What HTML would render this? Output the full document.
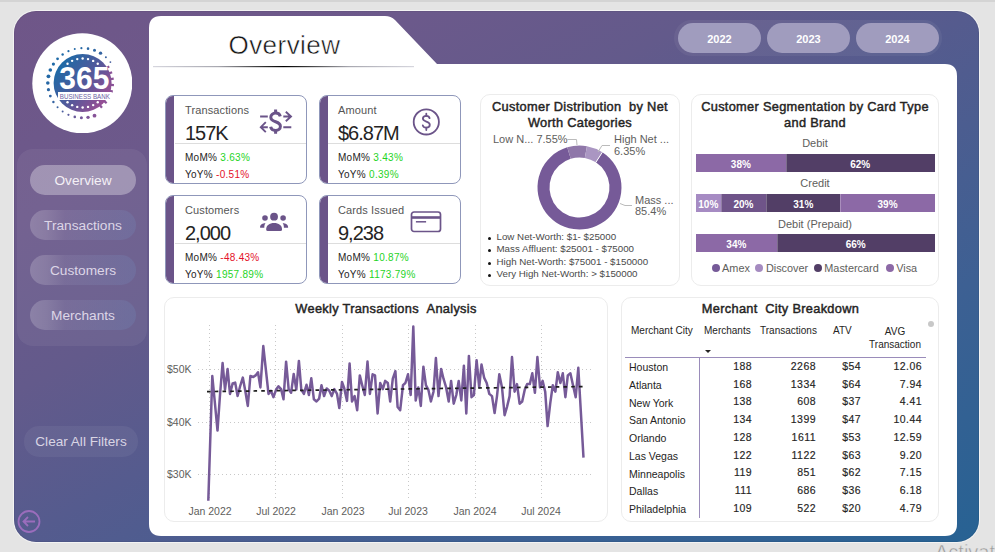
<!DOCTYPE html>
<html><head><meta charset="utf-8">
<style>
*{margin:0;padding:0;box-sizing:border-box}
html,body{width:995px;height:552px;overflow:hidden;background:#e4e4e4;font-family:"Liberation Sans",sans-serif;position:relative}
.abs{position:absolute}
#panel{left:14px;top:11px;width:965px;height:531px;border-radius:22px;box-shadow:0 0 0 1px rgba(255,255,255,0.55),inset 0 0 0 1px rgba(0,0,0,0.05);background:linear-gradient(to bottom right,#6f5688 0%,#6c598b 20%,#635a8b 36%,#555b8e 50%,#3d6093 75%,#276293 100%)}
.navwrap{left:17px;top:149px;width:130px;height:197px;border-radius:16px;background:rgba(255,255,255,0.06)}
.nav{left:30px;width:106px;height:30px;border-radius:15px;color:#ddd6e7;font-size:13.7px;text-align:center;line-height:31px;background:linear-gradient(90deg,rgba(255,255,255,0.2) 0%,rgba(255,255,255,0.16) 15%,rgba(225,230,255,0.08) 33%,rgba(120,200,255,0.1) 100%)}
.nav.on{background:rgba(255,255,255,0.32);color:#f4f0f6}
.yrwrap{left:674px;top:20px;width:268px;height:36px;border-radius:18px;background:rgba(255,255,255,0.05)}
.yr{top:23px;width:83px;height:30px;border-radius:15px;background:#a09cbe;color:#fff;font-weight:bold;font-size:11px;text-align:center;line-height:33.5px}
.card{background:#fff;border:1px solid #8f97ba;border-radius:8px;overflow:hidden}
.card .band{left:0;top:0;bottom:0;width:8px;background:#6b5489}
.lbl{font-size:11px;color:#555;letter-spacing:0.12px}
.big{font-size:20px;letter-spacing:-1px;color:#252423}
.sm{font-size:10px;color:#252423;letter-spacing:0.28px}
.g{color:#1fd41f}.r{color:#e41029}
.box{background:#fff;border:1px solid #ececec;border-radius:10px}
.ttl{font-size:12.8px;font-weight:normal;-webkit-text-stroke:0.45px #252423;color:#252423;letter-spacing:0.3px;text-align:center;line-height:16px;white-space:nowrap}
.gr{color:#605e5c}
.th{font-size:10px;color:#252423;white-space:nowrap}
.td{font-size:10.5px;color:#252423;white-space:nowrap}
.tn{font-size:10.5px;color:#252423;text-align:right;white-space:nowrap;letter-spacing:0.45px;margin-right:-0.45px;margin-top:-1.2px;-webkit-text-stroke:0.15px #252423}
.seg div{color:#fff;font-size:10px;font-weight:bold;text-align:center;line-height:21.5px;overflow:hidden}
.leg{font-size:10.9px;white-space:nowrap}
.dot{display:inline-block;width:9px;height:9px;border-radius:50%;margin:0 2px -1px 2px}
</style></head><body>
<div class="abs" style="left:0;top:0;width:995px;height:2px;background:#d4d4d4"></div>
<div id="panel" class="abs"></div>

<!-- logo -->
<svg class="abs" style="left:32px;top:33px" width="100" height="100" viewBox="0 0 100 100">
<defs><linearGradient id="lg" x1="0.1" y1="0.2" x2="0.95" y2="0.85"><stop offset="0" stop-color="#1d6aa6"/><stop offset="0.5" stop-color="#55589a"/><stop offset="1" stop-color="#a34d93"/></linearGradient><linearGradient id="lg2" gradientUnits="userSpaceOnUse" x1="15" y1="30" x2="75" y2="90"><stop offset="0" stop-color="#1a6ba8"/><stop offset="0.45" stop-color="#3a62a0"/><stop offset="1" stop-color="#a84e94"/></linearGradient></defs>
<circle cx="50.3" cy="50.3" r="50" fill="#fff"/>
<g fill="url(#lg2)"><circle cx="62.50" cy="82.70" r="1.90"/><circle cx="56.04" cy="84.37" r="1.70"/><circle cx="49.39" cy="84.78" r="1.50"/><circle cx="42.77" cy="83.91" r="1.30"/><circle cx="36.45" cy="81.79" r="1.10"/><circle cx="30.64" cy="78.51" r="1.00"/><circle cx="25.57" cy="74.17" r="1.00"/><circle cx="21.41" cy="68.95" r="1.20"/><circle cx="18.33" cy="63.04" r="1.40"/><circle cx="16.44" cy="56.64" r="1.60"/><circle cx="15.80" cy="50.00" r="1.80"/><circle cx="16.44" cy="43.36" r="1.90"/><circle cx="18.33" cy="36.96" r="1.80"/><circle cx="21.41" cy="31.05" r="1.60"/><circle cx="25.57" cy="25.83" r="1.40"/><circle cx="30.64" cy="21.49" r="1.20"/><circle cx="36.45" cy="18.21" r="1.10"/><circle cx="42.77" cy="16.09" r="1.00"/><circle cx="49.39" cy="15.22" r="1.10"/><circle cx="56.04" cy="15.63" r="1.30"/><circle cx="62.50" cy="17.30" r="1.50"/><circle cx="68.52" cy="20.17" r="1.70"/><circle cx="73.89" cy="24.14" r="1.00"/><circle cx="78.39" cy="29.06" r="0.90"/></g>
<circle cx="50.6" cy="50" r="29" fill="url(#lg)"/>
<g fill="#8a5297"><rect x="74.27" y="33.11" width="3.2" height="2.2" transform="rotate(-32.0 75.87 34.21)"/><rect x="77.00" y="38.71" width="3.2" height="2.2" transform="rotate(-20.0 78.60 39.81)"/><rect x="78.51" y="44.75" width="3.2" height="2.2" transform="rotate(-8.0 80.11 45.85)"/><rect x="78.73" y="50.98" width="3.2" height="2.2" transform="rotate(4.0 80.33 52.08)"/><rect x="77.65" y="57.11" width="3.2" height="2.2" transform="rotate(16.0 79.25 58.21)"/><rect x="75.31" y="62.89" width="3.2" height="2.2" transform="rotate(28.0 76.91 63.99)"/><rect x="71.83" y="68.06" width="3.2" height="2.2" transform="rotate(40.0 73.43 69.16)"/><rect x="67.35" y="72.38" width="3.2" height="2.2" transform="rotate(52.0 68.95 73.48)"/></g>
<g fill="#fff"><circle cx="35.52" cy="30.69" r="1.2"/><circle cx="35.52" cy="69.31" r="1.2"/><circle cx="40.13" cy="27.85" r="1.2"/><circle cx="40.13" cy="72.15" r="1.2"/><circle cx="45.26" cy="26.09" r="1.2"/><circle cx="45.26" cy="73.91" r="1.2"/><circle cx="50.64" cy="25.50" r="1.2"/><circle cx="50.64" cy="74.50" r="1.2"/><circle cx="56.03" cy="26.11" r="1.2"/><circle cx="56.03" cy="73.89" r="1.2"/><circle cx="61.15" cy="27.89" r="1.2"/><circle cx="61.15" cy="72.11" r="1.2"/><circle cx="65.75" cy="30.75" r="1.2"/><circle cx="65.75" cy="69.25" r="1.2"/></g>
<text x="52.3" y="55.6" text-anchor="middle" font-family="Liberation Sans" font-weight="bold" font-size="32" fill="#fff" textLength="50" lengthAdjust="spacingAndGlyphs">365</text>
<rect x="26" y="59" width="53.6" height="8" fill="#fff"/>
<text x="52.8" y="65.6" text-anchor="middle" font-family="Liberation Sans" font-size="7.2" fill="#6a62a2" textLength="50" lengthAdjust="spacingAndGlyphs">BUSINESS BANK</text>
</svg>

<div class="abs navwrap"></div>
<div class="abs nav on" style="top:165px">Overview</div>
<div class="abs nav" style="top:210px">Transactions</div>
<div class="abs nav" style="top:255px">Customers</div>
<div class="abs nav" style="top:300px">Merchants</div>
<div class="abs nav" style="left:24px;top:426px;width:114px;height:31px;line-height:32.5px;font-size:13.6px;color:#d9d5e4;background:rgba(255,255,255,0.055)">Clear All Filters</div>
<svg class="abs" style="left:16px;top:509px" width="26" height="26" viewBox="0 0 26 26"><circle cx="13" cy="12.5" r="10.5" fill="none" stroke="#9a6dbc" stroke-width="1.8"/><path d="M19 12.5H7.5M12 8L7.5 12.5L12 17" fill="none" stroke="#9a6dbc" stroke-width="1.8"/></svg>

<!-- white area -->
<svg class="abs" style="left:0;top:0" width="995" height="552">
<path d="M149 28 Q149 16 161 16 L385 16 Q391 16 395 20 L437 64 L945 64 Q957 64 957 76 L957 524 Q957 536 945 536 L161 536 Q149 536 149 524 Z" fill="#fff"/>
<defs><linearGradient id="ul" x1="0" x2="1"><stop offset="0" stop-color="#d6d6de"/><stop offset="0.25" stop-color="#a8a8b0"/><stop offset="0.42" stop-color="#333"/><stop offset="0.5" stop-color="#000"/><stop offset="0.58" stop-color="#333"/><stop offset="0.75" stop-color="#a8a8b0"/><stop offset="1" stop-color="#d6d6de"/></linearGradient></defs>
<rect x="153" y="66" width="261" height="1.2" fill="url(#ul)"/>
</svg>
<div class="abs" style="left:228.5px;top:29.5px;font-size:26px;letter-spacing:0.45px;color:#111;-webkit-text-stroke:0.5px #fff">Overview</div>

<div class="abs yrwrap"></div>
<div class="abs yr" style="left:678px">2022</div>
<div class="abs yr" style="left:767px">2023</div>
<div class="abs yr" style="left:856px">2024</div>

<!-- KPI cards -->
<div class="abs card" style="left:165px;top:95px;width:142px;height:89px"><div class="abs band"></div></div>
<div class="abs card" style="left:319px;top:95px;width:142px;height:89px"><div class="abs band"></div></div>
<div class="abs card" style="left:165px;top:195px;width:142px;height:89px"><div class="abs band"></div></div>
<div class="abs card" style="left:319px;top:195px;width:142px;height:89px"><div class="abs band"></div></div>

<div class="abs lbl" style="left:185px;top:103.5px">Transactions</div>
<div class="abs big" style="left:185px;top:121.5px">157K</div>
<div class="abs" style="left:175px;top:143px;width:131px;height:1px;background:#ddd"></div>
<div class="abs sm" style="left:185px;top:152px">MoM% <span class="g">3.63%</span></div>
<div class="abs sm" style="left:185px;top:169px">YoY% <span class="r">-0.51%</span></div>

<div class="abs lbl" style="left:338px;top:103.5px">Amount</div>
<div class="abs big" style="left:338px;top:121.5px">$6.87M</div>
<div class="abs" style="left:328px;top:143px;width:132px;height:1px;background:#ddd"></div>
<div class="abs sm" style="left:338px;top:152px">MoM% <span class="g">3.43%</span></div>
<div class="abs sm" style="left:338px;top:169px">YoY% <span class="g">0.39%</span></div>

<div class="abs lbl" style="left:185px;top:203.5px">Customers</div>
<div class="abs big" style="left:185px;top:221.5px">2,000</div>
<div class="abs" style="left:175px;top:243px;width:131px;height:1px;background:#ddd"></div>
<div class="abs sm" style="left:185px;top:252px">MoM% <span class="r">-48.43%</span></div>
<div class="abs sm" style="left:185px;top:269px">YoY% <span class="g">1957.89%</span></div>

<div class="abs lbl" style="left:338px;top:203.5px">Cards Issued</div>
<div class="abs big" style="left:338px;top:221.5px">9,238</div>
<div class="abs" style="left:328px;top:243px;width:132px;height:1px;background:#ddd"></div>
<div class="abs sm" style="left:338px;top:252px">MoM% <span class="g">10.87%</span></div>
<div class="abs sm" style="left:338px;top:269px">YoY% <span class="g">1173.79%</span></div>


<!-- KPI icons -->
<svg class="abs" style="left:258px;top:108px" width="36" height="28" viewBox="0 0 36 28">
<g fill="none" stroke="#6b5489" stroke-width="1.9" stroke-linecap="butt" stroke-linejoin="miter">
<path d="M2.1 8.5H9.8M25.3 8.5H33M27.8 3.8L33 8.5L27.8 13.2"/>
<path d="M2.8 19.2H9.8M25.3 19.2H33.3M7.8 14.2L2.8 19.2L7.8 24.2"/>
<path d="M22.3 8.4C21.7 6.1 19.9 5.1 17.6 5.1C14.8 5.1 12.8 6.8 12.8 9.3C12.8 15.2 22.4 12.4 22.4 18.3C22.4 20.8 20.3 22.4 17.6 22.4C14.9 22.4 13.1 21 12.6 18.7" stroke-width="3"/>
<path d="M17.6 1.4V5.1M17.6 22.4V25.8" stroke-width="3"/>
</g></svg>
<svg class="abs" style="left:412px;top:108px" width="28" height="28" viewBox="0 0 28 28">
<circle cx="14.3" cy="13.9" r="12.6" fill="none" stroke="#6b5489" stroke-width="1.8"/>
<path d="M17.6 10.2C17.3 8.7 16.1 7.9 14.3 7.9C12.3 7.9 10.9 9 10.9 10.6C10.9 14.3 17.8 13 17.8 16.8C17.8 18.6 16.3 19.7 14.3 19.7C12.4 19.7 11.1 18.8 10.8 17.4" fill="none" stroke="#6b5489" stroke-width="1.8" stroke-linecap="round"/>
<path d="M14.3 5.6V7.9M14.3 19.7V22" stroke="#6b5489" stroke-width="1.8" stroke-linecap="round"/>
</svg>
<svg class="abs" style="left:258px;top:211px" width="32" height="22" viewBox="0 0 32 22">
<g fill="#6b5489">
<circle cx="16.05" cy="5.7" r="3.9"/>
<circle cx="7" cy="7" r="2.8"/>
<circle cx="25.1" cy="7" r="2.8"/>
<path d="M8.2 18C8.2 14.5 11.5 12.1 16.1 12.1C20.7 12.1 24 14.5 24 18V18.5Q24 20 22.5 20H9.7Q8.2 20 8.2 18.5Z"/>
<path d="M7.5 12.1C4.5 12.3 2.1 13.8 2.1 16V16.8H6.3C6.3 14.8 6.7 13.2 7.5 12.1Z"/>
<path d="M24.7 12.1C27.7 12.3 30.1 13.8 30.1 16V16.8H25.9C25.9 14.8 25.5 13.2 24.7 12.1Z"/>
</g></svg>
<svg class="abs" style="left:410px;top:210px" width="32" height="24" viewBox="0 0 32 24">
<rect x="1.5" y="2" width="29" height="19.5" rx="2.5" fill="none" stroke="#6b5489" stroke-width="1.7"/>
<rect x="1.5" y="6.2" width="29" height="2.6" fill="#6b5489"/>
<path d="M5.9 11.8H16.1" stroke="#6b5489" stroke-width="1.5"/>
</svg>

<!-- boxes -->
<div class="abs box" style="left:480px;top:94px;width:200px;height:192px"></div>
<div class="abs box" style="left:691px;top:94px;width:248px;height:192px"></div>
<div class="abs box" style="left:164px;top:297px;width:444px;height:225px"></div>
<div class="abs box" style="left:621px;top:297px;width:318px;height:225px"></div>


<!-- donut card -->
<div class="abs ttl" style="left:480px;top:99px;width:200px;line-height:15.8px">Customer Distribution &nbsp;by Net<br>Worth Categories</div>
<svg class="abs" style="left:0;top:0" width="995" height="552">
<path d="M602.37 152.28A42 42 0 1 1 567.22 147.34L570.73 158.81A30 30 0 1 0 595.84 162.34Z" fill="#765a98"/>
<path d="M567.22 147.34A42 42 0 0 1 586.94 146.16L584.81 157.97A30 30 0 0 0 570.73 158.81Z" fill="#8f77a9"/>
<path d="M586.94 146.16A42 42 0 0 1 602.37 152.28L595.84 162.34A30 30 0 0 0 584.81 157.97Z" fill="#aa96c2"/>
<line x1="595.84" y1="162.34" x2="602.37" y2="152.28" stroke="#fff" stroke-width="1"/>
<g stroke="#bbb" stroke-width="1" fill="none">
<polyline points="567.5,139.5 576.5,139.5 577,145"/>
<polyline points="610,145.5 602,145.5 598,152"/>
<polyline points="632,205.5 625,205.5 620,203.5"/>
</g>
</svg>
<div class="abs gr" style="left:493px;top:133px;font-size:11px">Low N... 7.55%</div>
<div class="abs gr" style="left:614px;top:133px;font-size:11px">High Net ...</div>
<div class="abs gr" style="left:614px;top:145px;font-size:11px">6.35%</div>
<div class="abs gr" style="left:635px;top:194px;font-size:11px">Mass ...</div>
<div class="abs gr" style="left:635px;top:205px;font-size:11px">85.4%</div>
<div class="abs" style="left:488px;top:236.80px;width:3.2px;height:3.2px;border-radius:50%;background:#111"></div>
<div class="abs" style="left:496.5px;top:231.00px;font-size:9.75px;line-height:12px;color:#4a4a4a;white-space:nowrap">Low Net-Worth: $1- $25000</div>
<div class="abs" style="left:488px;top:249.27px;width:3.2px;height:3.2px;border-radius:50%;background:#111"></div>
<div class="abs" style="left:496.5px;top:243.47px;font-size:9.75px;line-height:12px;color:#4a4a4a;white-space:nowrap">Mass Affluent: $25001 - $75000</div>
<div class="abs" style="left:488px;top:261.74px;width:3.2px;height:3.2px;border-radius:50%;background:#111"></div>
<div class="abs" style="left:496.5px;top:255.94px;font-size:9.75px;line-height:12px;color:#4a4a4a;white-space:nowrap">High Net-Worth: $75001 - $150000</div>
<div class="abs" style="left:488px;top:274.21px;width:3.2px;height:3.2px;border-radius:50%;background:#111"></div>
<div class="abs" style="left:496.5px;top:268.41px;font-size:9.75px;line-height:12px;color:#4a4a4a;white-space:nowrap">Very High Net-Worth: &gt; $150000</div>

<!-- segmentation card -->
<div class="abs ttl" style="left:691px;top:99px;width:248px;line-height:15.8px">Customer Segmentation by Card Type<br>and Brand</div>
<div class="abs gr" style="left:691px;top:137px;width:248px;text-align:center;font-size:11px">Debit</div>
<div class="abs gr" style="left:691px;top:177px;width:248px;text-align:center;font-size:11px">Credit</div>
<div class="abs gr" style="left:691px;top:218px;width:248px;text-align:center;font-size:11px">Debit (Prepaid)</div>
<div class="abs seg" style="left:696px;top:154.1px;width:238.8px;height:18.3px;display:flex"><div style="width:89.7px;flex:none;background:#8c69a6;">38%</div><div style="width:149.1px;flex:none;background:#523e66;box-shadow:inset 1px 0 0 rgba(255,255,255,0.25);">62%</div></div>
<div class="abs seg" style="left:696px;top:194.1px;width:238.8px;height:18.3px;display:flex"><div style="width:24.6px;flex:none;background:#a68bc3;">10%</div><div style="width:45.7px;flex:none;background:#6f5489;box-shadow:inset 1px 0 0 rgba(255,255,255,0.25);">20%</div><div style="width:74px;flex:none;background:#523e66;box-shadow:inset 1px 0 0 rgba(255,255,255,0.25);">31%</div><div style="width:94.5px;flex:none;background:#8c69a6;box-shadow:inset 1px 0 0 rgba(255,255,255,0.25);">39%</div></div>
<div class="abs seg" style="left:696px;top:233.8px;width:238.8px;height:18.3px;display:flex"><div style="width:80.7px;flex:none;background:#8c69a6;">34%</div><div style="width:158.1px;flex:none;background:#523e66;box-shadow:inset 1px 0 0 rgba(255,255,255,0.25);">66%</div></div>
<div class="abs" style="left:711.6px;top:264.2px;width:8px;height:8px;border-radius:50%;background:#765a98"></div>
<div class="abs gr leg" style="left:722.1px;top:261.5px">Amex</div>
<div class="abs" style="left:755.1px;top:264.2px;width:8px;height:8px;border-radius:50%;background:#a58bc0"></div>
<div class="abs gr leg" style="left:765.9px;top:261.5px">Discover</div>
<div class="abs" style="left:813.6px;top:264.2px;width:8px;height:8px;border-radius:50%;background:#523e66"></div>
<div class="abs gr leg" style="left:824.3px;top:261.5px">Mastercard</div>
<div class="abs" style="left:886.0px;top:264.2px;width:8px;height:8px;border-radius:50%;background:#8c69a6"></div>
<div class="abs gr leg" style="left:896.2px;top:261.5px">Visa</div>

<!-- chart svg -->
<svg class="abs" style="left:0;top:0" width="995" height="552">
<g stroke="#c8c8c8" stroke-width="1" stroke-dasharray="1,3">
<line x1="198" y1="369.5" x2="592" y2="369.5"/>
<line x1="198" y1="422.5" x2="592" y2="422.5"/>
<line x1="198" y1="474.5" x2="592" y2="474.5"/>
<line x1="209.5" y1="325" x2="209.5" y2="500"/>
<line x1="275.5" y1="325" x2="275.5" y2="500"/>
<line x1="342.5" y1="325" x2="342.5" y2="500"/>
<line x1="408.5" y1="325" x2="408.5" y2="500"/>
<line x1="475.5" y1="325" x2="475.5" y2="500"/>
<line x1="541.5" y1="325" x2="541.5" y2="500"/>
</g>
<polyline points="208.3,500.8 212.3,376 214.9,403 217.5,430.6 220,395 222.6,363 225,389.6 227.6,369.1 230,393.9 232.6,383.5 235.2,382.6 237.6,396 240.2,386 242.8,377.6 245.3,391 247.8,405.9 250.4,376 253.3,377 255.6,375.4 258,372.2 260.4,387.4 263.3,346.1 265.9,370 268.5,393.9 270.9,390.7 273.5,397.2 276.1,389.6 278.5,386.3 281.1,389.1 283.5,399.3 286.1,361.7 288.7,389.6 291.1,392.8 293.7,373.9 296.3,389.6 298.9,360.9 301.3,389.6 303.9,393.9 306.5,384.8 308.9,395 311.3,378.3 313.9,399.3 316.5,401.5 319.1,398.7 321.5,385.2 324.1,396.1 326.7,388.5 329.3,390.7 331.7,396.1 334.3,389.1 337,393.9 339.3,408 342,382 344.3,388.5 347,400.9 349.6,363.5 352,401.5 354.6,396.1 357.2,410.2 359.8,375.4 362.2,385.2 364.8,395 367.5,361.5 369.9,393.9 372.6,374.3 375,375.4 377.6,413.5 380.2,383 382.8,389.1 385.2,380.9 387.8,383 390.2,401.5 392.8,378.7 395.4,371.1 397.6,407 400.2,410.2 403,385.2 405.4,383 408,374.3 410.7,395 413.3,326.5 415.7,400.4 418.3,387.4 420.8,405.9 423.4,366.7 425.9,385.2 428.3,389.6 430.9,401.5 433.5,391.7 435.9,358 438.5,396.1 441.1,368.9 443.5,378.7 446.1,387.4 448.7,401.5 451.1,380.9 453.7,403.7 456.3,395 458.7,380.9 461.3,400.4 463.9,365.7 466.3,413.5 468.9,355.9 471.5,397.2 473.9,395 476.6,360.2 479.2,387.4 481.5,364.6 484.1,377.6 486.7,383 489.3,393.9 492,396.1 494.6,413 497,396.1 499.3,374.3 502,387.4 504.6,415.2 507,407 509.6,396.1 512,357 514.6,391.7 517,384.1 519.6,403.7 522.2,401.5 524.8,389.6 527.2,384.1 529.8,384.1 532.3,373.3 534.9,392.8 537.4,357 540,387.4 542.6,380.9 545.2,391.7 547.6,426.1 550.2,403.7 552.8,385.2 555.4,391.7 557.8,372.2 560.4,383 562.8,373.3 565.4,397.2 567.8,375.4 570.4,373.3 573,385.2 575.7,397.2 578.3,367.8 583.5,457.6" fill="none" stroke="#765a98" stroke-width="2.5" stroke-linejoin="round"/>
<line x1="207" y1="391.6" x2="583" y2="386.6" stroke="#1e1e1e" stroke-width="1.7" stroke-dasharray="3.6,4.15"/>
</svg>
<div class="abs ttl" style="left:164px;top:301px;width:444px">Weekly Transactions &nbsp;Analysis</div>
<div class="abs gr" style="left:167px;top:363px;font-size:10.5px">$50K</div>
<div class="abs gr" style="left:167px;top:416px;font-size:10.5px">$40K</div>
<div class="abs gr" style="left:167px;top:468px;font-size:10.5px">$30K</div>
<div class="abs gr" style="left:170px;top:505px;width:80px;text-align:center;font-size:10.5px">Jan 2022</div>
<div class="abs gr" style="left:236px;top:505px;width:80px;text-align:center;font-size:10.5px">Jul 2022</div>
<div class="abs gr" style="left:303px;top:505px;width:80px;text-align:center;font-size:10.5px">Jan 2023</div>
<div class="abs gr" style="left:368px;top:505px;width:80px;text-align:center;font-size:10.5px">Jul 2023</div>
<div class="abs gr" style="left:435px;top:505px;width:80px;text-align:center;font-size:10.5px">Jan 2024</div>
<div class="abs gr" style="left:501px;top:505px;width:80px;text-align:center;font-size:10.5px">Jul 2024</div>

<!-- merchant table -->
<div class="abs ttl" style="left:622px;top:301px;width:317px">Merchant &nbsp;City Breakdown</div>
<div class="abs th" style="left:631px;top:324.5px">Merchant City</div>
<div class="abs th" style="left:704px;top:324.5px">Merchants</div>
<div class="abs th" style="left:760px;top:324.5px">Transactions</div>
<div class="abs th" style="left:833px;top:324.5px">ATV</div>
<div class="abs th" style="left:862px;top:324.5px;width:66px;text-align:center;line-height:13px">AVG<br>Transaction</div>
<div class="abs" style="left:704.5px;top:349.5px;width:0;height:0;border-left:3.2px solid transparent;border-right:3.2px solid transparent;border-top:3.5px solid #252423"></div>
<div class="abs" style="left:625px;top:357px;width:301px;height:1px;background:#9a8cba"></div>
<div class="abs" style="left:699px;top:357px;width:1px;height:161px;background:#9a8cba"></div>
<div class="abs" style="left:928px;top:321px;width:6px;height:6px;border-radius:3px;background:#c8c8c8"></div>
<div class="abs td" style="left:629px;top:361.00px">Houston</div>
<div class="abs tn" style="left:702px;top:361.00px;width:50px">188</div>
<div class="abs tn" style="left:756px;top:361.00px;width:60px">2268</div>
<div class="abs tn" style="left:820px;top:361.00px;width:41px">$54</div>
<div class="abs tn" style="left:862px;top:361.00px;width:60px">12.06</div>
<div class="abs td" style="left:629px;top:378.75px">Atlanta</div>
<div class="abs tn" style="left:702px;top:378.75px;width:50px">168</div>
<div class="abs tn" style="left:756px;top:378.75px;width:60px">1334</div>
<div class="abs tn" style="left:820px;top:378.75px;width:41px">$64</div>
<div class="abs tn" style="left:862px;top:378.75px;width:60px">7.94</div>
<div class="abs td" style="left:629px;top:396.50px">New York</div>
<div class="abs tn" style="left:702px;top:396.50px;width:50px">138</div>
<div class="abs tn" style="left:756px;top:396.50px;width:60px">608</div>
<div class="abs tn" style="left:820px;top:396.50px;width:41px">$37</div>
<div class="abs tn" style="left:862px;top:396.50px;width:60px">4.41</div>
<div class="abs td" style="left:629px;top:414.25px">San Antonio</div>
<div class="abs tn" style="left:702px;top:414.25px;width:50px">134</div>
<div class="abs tn" style="left:756px;top:414.25px;width:60px">1399</div>
<div class="abs tn" style="left:820px;top:414.25px;width:41px">$47</div>
<div class="abs tn" style="left:862px;top:414.25px;width:60px">10.44</div>
<div class="abs td" style="left:629px;top:432.00px">Orlando</div>
<div class="abs tn" style="left:702px;top:432.00px;width:50px">128</div>
<div class="abs tn" style="left:756px;top:432.00px;width:60px">1611</div>
<div class="abs tn" style="left:820px;top:432.00px;width:41px">$53</div>
<div class="abs tn" style="left:862px;top:432.00px;width:60px">12.59</div>
<div class="abs td" style="left:629px;top:449.75px">Las Vegas</div>
<div class="abs tn" style="left:702px;top:449.75px;width:50px">122</div>
<div class="abs tn" style="left:756px;top:449.75px;width:60px">1122</div>
<div class="abs tn" style="left:820px;top:449.75px;width:41px">$63</div>
<div class="abs tn" style="left:862px;top:449.75px;width:60px">9.20</div>
<div class="abs td" style="left:629px;top:467.50px">Minneapolis</div>
<div class="abs tn" style="left:702px;top:467.50px;width:50px">119</div>
<div class="abs tn" style="left:756px;top:467.50px;width:60px">851</div>
<div class="abs tn" style="left:820px;top:467.50px;width:41px">$62</div>
<div class="abs tn" style="left:862px;top:467.50px;width:60px">7.15</div>
<div class="abs td" style="left:629px;top:485.25px">Dallas</div>
<div class="abs tn" style="left:702px;top:485.25px;width:50px">111</div>
<div class="abs tn" style="left:756px;top:485.25px;width:60px">686</div>
<div class="abs tn" style="left:820px;top:485.25px;width:41px">$36</div>
<div class="abs tn" style="left:862px;top:485.25px;width:60px">6.18</div>
<div class="abs td" style="left:629px;top:503.00px">Philadelphia</div>
<div class="abs tn" style="left:702px;top:503.00px;width:50px">109</div>
<div class="abs tn" style="left:756px;top:503.00px;width:60px">522</div>
<div class="abs tn" style="left:820px;top:503.00px;width:41px">$20</div>
<div class="abs tn" style="left:862px;top:503.00px;width:60px">4.79</div>
<div class="abs" style="left:935px;top:540.5px;font-size:20px;color:#999;-webkit-text-stroke:0.5px #e4e4e4;white-space:nowrap">Activate</div>
</body></html>
